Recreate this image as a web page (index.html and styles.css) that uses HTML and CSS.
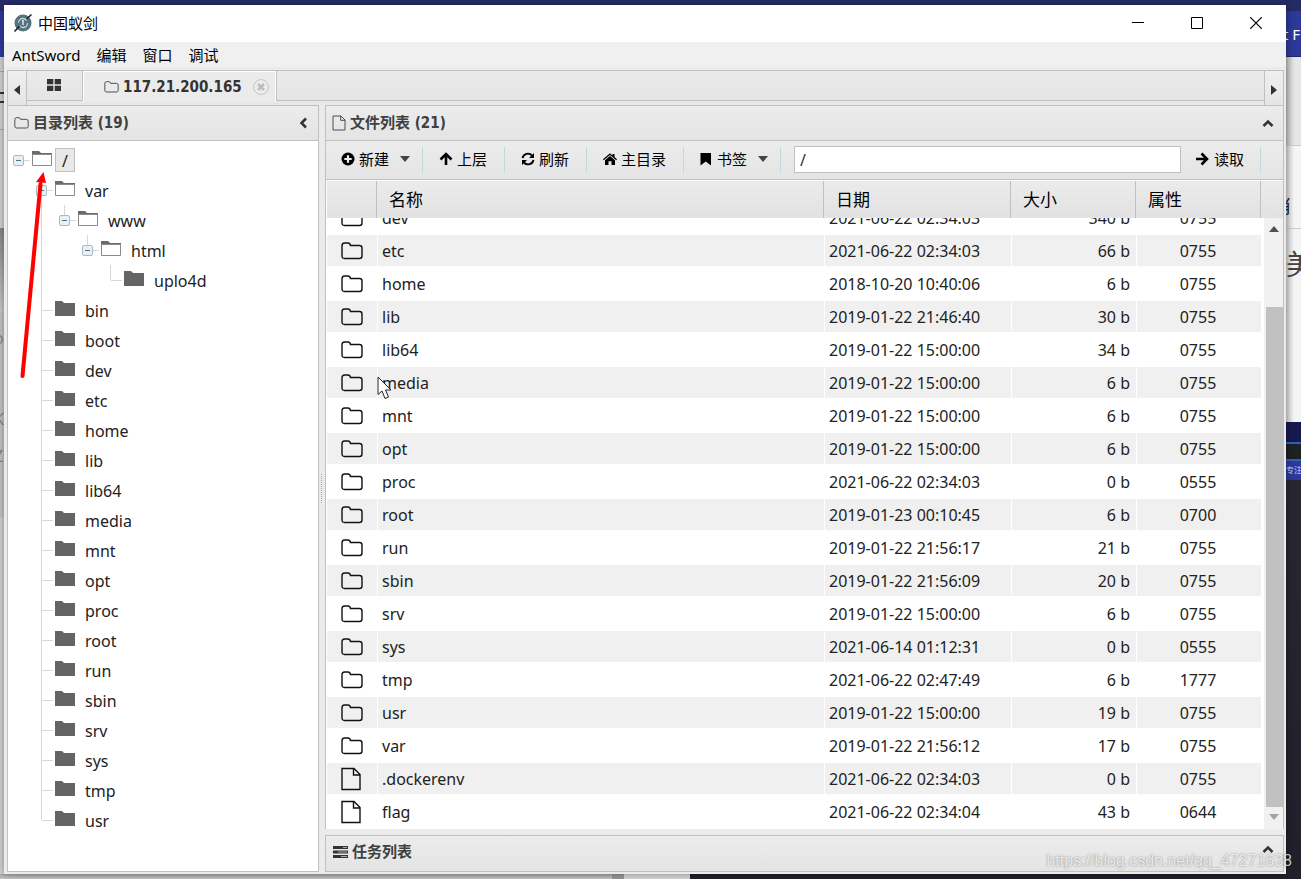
FILE: index.html
```
<!DOCTYPE html>
<html lang="zh-CN">
<head>
<meta charset="utf-8">
<title>中国蚁剑</title>
<link rel="stylesheet" href="styles.css">
</head>
<body>
<svg class="defs" aria-hidden="true">
  <symbol id="folder-line" viewBox="0 0 22 18"><path d="M1 4Q1 1 3.500 1H7Q9 1 9.500 3.500H18.500Q21 3.500 21 6V14Q21 16.500 18.500 16.500H3.500Q1 16.500 1 14Z" fill="none" stroke="currentColor" stroke-width="1.400"/></symbol>
  <symbol id="file-line" viewBox="0 0 20 24"><path d="M1 1.500H13L19 7.500V22.500H1ZM12.500 1.500V8H19" fill="none" stroke="currentColor" stroke-width="1.400"/></symbol>
  <symbol id="dir" viewBox="0 0 21 17"><path d="M0 1H7L9 3H20V16H0Z" fill="#646464"/></symbol>
  <symbol id="dir-open" viewBox="0 0 21 17"><path d="M0 1H7L9 3H20V5H0Z" fill="#6b6b6b"/><path d="M.500 4.500H19.500V15.500H.500Z" fill="#fff" stroke="#8a8a8a"/></symbol>
  <symbol id="chev" viewBox="0 0 12 8"><path d="M1.500 7L6 2.500L10.500 7" fill="none" stroke="#333" stroke-width="2.500"/></symbol>
  <symbol id="caret" viewBox="0 0 10 6"><path d="M0 0H10L5 6Z" fill="#444"/></symbol>
</svg>

<div class="desk" aria-hidden="true">
  <div class="desk-top"></div>
  <div class="desk-left"><i class="nav"></i><i class="line l1"></i><i class="bar b1"></i><i class="bar b2"></i><i class="line l2"></i><i class="shade"></i><i class="plain"></i><span class="g1">o</span><span class="g2">K</span><span class="g3">Z</span></div>
  <div class="desk-right"><i class="nav"></i><i class="band"></i><i class="page"></i><i class="dark"></i><span class="r1">t F</span><span class="r2">肖</span><span class="r3">美</span><span class="r4">专注</span></div>
  <div class="desk-bottom"><i class="thumb"></i><i class="rest"></i><i class="dark"></i></div>
</div>

<main class="window">
  <header class="title">
    <svg class="logo" viewBox="0 0 20 20"><circle cx="10" cy="10" r="8.500" fill="#55737f"/><circle cx="10" cy="10" r="4.500" fill="none" stroke="#c5d3d8" stroke-width="1.300" stroke-dasharray="11 3"/><path d="M10 7V12M9 8H10" stroke="#dfe8eb" stroke-width="1.500"/><path d="M1.500 18.500L6.500 13M13.500 6L18.500 1.500" stroke="#222" stroke-width="1.600"/></svg>
    <h1>中国蚁剑</h1>
    <div class="win-btns">
      <button type="button" aria-label="最小化"><svg viewBox="0 0 12 12"><path d="M0 5.500H12" stroke="#000"/></svg></button>
      <button type="button" aria-label="最大化"><svg viewBox="0 0 12 12"><path d="M.500 .500H11.500V11.500H.500Z" fill="none" stroke="#000"/></svg></button>
      <button type="button" aria-label="关闭"><svg viewBox="0 0 12 12"><path d="M0 0L12 12M12 0L0 12" stroke="#000" stroke-width="1.200"/></svg></button>
    </div>
  </header>
  <nav class="menu"><button type="button">AntSword</button><button type="button">编辑</button><button type="button">窗口</button><button type="button">调试</button></nav>

  <div class="content">
    <div class="tabs">
      <button type="button" class="scroll left" aria-label="向左"><svg viewBox="0 0 6 10"><path d="M6 0V10L0 5Z" fill="#333"/></svg></button>
      <button type="button" class="tab home" aria-label="主页"><svg viewBox="0 0 14 12"><path d="M0 0H6.300V5.300H0ZM7.700 0H14V5.300H7.700ZM0 6.700H6.300V12H0ZM7.700 6.700H14V12H7.700Z" fill="#333"/></svg></button>
      <div class="tab active"><svg class="fi"><use href="#folder-line"/></svg><b>117.21.200.165</b>
        <button type="button" class="close" aria-label="关闭标签"><svg viewBox="0 0 16 16"><circle cx="8" cy="8" r="7.400" fill="#ededed" stroke="#c2c2c2"/><path d="M5 5L11 11M11 5L5 11" stroke="#bdbdbd" stroke-width="2.500"/></svg></button></div>
      <div class="tab-rest"></div>
      <button type="button" class="scroll right" aria-label="向右"><svg viewBox="0 0 6 10"><path d="M0 0V10L6 5Z" fill="#333"/></svg></button>
    </div>

    <div class="cols">
      <section class="panel dirs">
        <header class="bar-head"><svg class="fi"><use href="#folder-line"/></svg><h2>目录列表 (19)</h2><button type="button" class="fold" aria-label="折叠"><svg viewBox="0 0 8 12"><path d="M7 1.500L2.500 6L7 10.500" fill="none" stroke="#333" stroke-width="2.500"/></svg></button></header>
        <ul class="tree">
          <li><div class="node"><button type="button" class="tog" aria-label="收起"></button><svg><use href="#dir-open"/></svg><span class="sel">/</span></div>
            <ul class="trunk">
              <li><div class="node"><button type="button" class="tog" aria-label="收起"></button><svg><use href="#dir-open"/></svg><span>var</span></div>
                <ul><li><div class="node"><button type="button" class="tog" aria-label="收起"></button><svg><use href="#dir-open"/></svg><span>www</span></div>
                  <ul><li><div class="node"><button type="button" class="tog" aria-label="收起"></button><svg><use href="#dir-open"/></svg><span>html</span></div>
                    <ul><li><div class="node"><svg><use href="#dir"/></svg><span>uplo4d</span></div></li></ul></li></ul></li></ul></li>
              <li><div class="node"><svg><use href="#dir"/></svg><span>bin</span></div></li>
              <li><div class="node"><svg><use href="#dir"/></svg><span>boot</span></div></li>
              <li><div class="node"><svg><use href="#dir"/></svg><span>dev</span></div></li>
              <li><div class="node"><svg><use href="#dir"/></svg><span>etc</span></div></li>
              <li><div class="node"><svg><use href="#dir"/></svg><span>home</span></div></li>
              <li><div class="node"><svg><use href="#dir"/></svg><span>lib</span></div></li>
              <li><div class="node"><svg><use href="#dir"/></svg><span>lib64</span></div></li>
              <li><div class="node"><svg><use href="#dir"/></svg><span>media</span></div></li>
              <li><div class="node"><svg><use href="#dir"/></svg><span>mnt</span></div></li>
              <li><div class="node"><svg><use href="#dir"/></svg><span>opt</span></div></li>
              <li><div class="node"><svg><use href="#dir"/></svg><span>proc</span></div></li>
              <li><div class="node"><svg><use href="#dir"/></svg><span>root</span></div></li>
              <li><div class="node"><svg><use href="#dir"/></svg><span>run</span></div></li>
              <li><div class="node"><svg><use href="#dir"/></svg><span>sbin</span></div></li>
              <li><div class="node"><svg><use href="#dir"/></svg><span>srv</span></div></li>
              <li><div class="node"><svg><use href="#dir"/></svg><span>sys</span></div></li>
              <li><div class="node"><svg><use href="#dir"/></svg><span>tmp</span></div></li>
              <li><div class="node"><svg><use href="#dir"/></svg><span>usr</span></div></li>
            </ul></li>
        </ul>
      </section>
      <div class="gutter"><i></i></div>
      <div class="right-col">
        <section class="panel files">
          <header class="bar-head"><svg class="doc"><use href="#file-line"/></svg><h2>文件列表 (21)</h2><button type="button" class="fold up" aria-label="折叠"><svg><use href="#chev"/></svg></button></header>
          <div class="tools">
            <button type="button"><svg viewBox="0 0 14 14"><circle cx="7" cy="7" r="6.500"/><path d="M7 3.300V10.700M3.300 7H10.700" stroke="#eee" stroke-width="2.200"/></svg>新建<svg class="caret"><use href="#caret"/></svg></button>
            <button type="button"><svg viewBox="0 0 14 14"><path d="M7 13V2.500M1.500 7.500L7 2L12.500 7.500" fill="none" stroke="#000" stroke-width="2.600"/></svg>上层</button>
            <button type="button"><svg viewBox="0 0 14 14"><path d="M1.500 6A5.500 5.500 0 0 1 11 3.500M12.500 8A5.500 5.500 0 0 1 3 10.500" fill="none" stroke="#000" stroke-width="1.900"/><path d="M13 1V6H8ZM1 13V8H6Z"/></svg>刷新</button>
            <button type="button"><svg viewBox="0 0 14 14"><path d="M0 7.300L7 1.200L9.500 3.400V2H11.500V5.100L14 7.300L13.200 8.200L7 2.900L.800 8.200Z"/><path d="M2 8.200L7 4L12 8.200V13H8.500V9.300H5.500V13H2Z"/></svg>主目录</button>
            <button type="button"><svg viewBox="0 0 14 14"><path d="M1.500 1H12V13.500L6.750 9.500L1.500 13.500Z"/></svg>书签<svg class="caret"><use href="#caret"/></svg></button>
            <input type="text" value="/" aria-label="路径">
            <button type="button"><svg viewBox="0 0 14 14"><path d="M1 7H11.500M6.500 1.500L12 7L6.500 12.500" fill="none" stroke="#000" stroke-width="2.600"/></svg>读取</button>
            <span class="tail"></span>
          </div>
          <table class="grid head"><colgroup><col class="c0"><col><col class="c2"><col class="c3"><col class="c3"><col class="c5"></colgroup>
            <thead><tr><th></th><th>名称</th><th>日期</th><th>大小</th><th>属性</th><th></th></tr></thead></table>
          <div class="body">
            <div class="view">
            <table class="grid rows" aria-label="文件列表"><colgroup><col class="c0"><col><col class="c2"><col class="c3"><col class="c3"></colgroup>
              <tbody>
              <tr><td><svg><use href="#folder-line"/></svg></td><td>dev</td><td>2021-06-22 02:34:03</td><td>340 b</td><td>0755</td></tr>
              <tr><td><svg><use href="#folder-line"/></svg></td><td>etc</td><td>2021-06-22 02:34:03</td><td>66 b</td><td>0755</td></tr>
              <tr><td><svg><use href="#folder-line"/></svg></td><td>home</td><td>2018-10-20 10:40:06</td><td>6 b</td><td>0755</td></tr>
              <tr><td><svg><use href="#folder-line"/></svg></td><td>lib</td><td>2019-01-22 21:46:40</td><td>30 b</td><td>0755</td></tr>
              <tr><td><svg><use href="#folder-line"/></svg></td><td>lib64</td><td>2019-01-22 15:00:00</td><td>34 b</td><td>0755</td></tr>
              <tr><td><svg><use href="#folder-line"/></svg></td><td>media</td><td>2019-01-22 15:00:00</td><td>6 b</td><td>0755</td></tr>
              <tr><td><svg><use href="#folder-line"/></svg></td><td>mnt</td><td>2019-01-22 15:00:00</td><td>6 b</td><td>0755</td></tr>
              <tr><td><svg><use href="#folder-line"/></svg></td><td>opt</td><td>2019-01-22 15:00:00</td><td>6 b</td><td>0755</td></tr>
              <tr><td><svg><use href="#folder-line"/></svg></td><td>proc</td><td>2021-06-22 02:34:03</td><td>0 b</td><td>0555</td></tr>
              <tr><td><svg><use href="#folder-line"/></svg></td><td>root</td><td>2019-01-23 00:10:45</td><td>6 b</td><td>0700</td></tr>
              <tr><td><svg><use href="#folder-line"/></svg></td><td>run</td><td>2019-01-22 21:56:17</td><td>21 b</td><td>0755</td></tr>
              <tr><td><svg><use href="#folder-line"/></svg></td><td>sbin</td><td>2019-01-22 21:56:09</td><td>20 b</td><td>0755</td></tr>
              <tr><td><svg><use href="#folder-line"/></svg></td><td>srv</td><td>2019-01-22 15:00:00</td><td>6 b</td><td>0755</td></tr>
              <tr><td><svg><use href="#folder-line"/></svg></td><td>sys</td><td>2021-06-14 01:12:31</td><td>0 b</td><td>0555</td></tr>
              <tr><td><svg><use href="#folder-line"/></svg></td><td>tmp</td><td>2021-06-22 02:47:49</td><td>6 b</td><td>1777</td></tr>
              <tr><td><svg><use href="#folder-line"/></svg></td><td>usr</td><td>2019-01-22 15:00:00</td><td>19 b</td><td>0755</td></tr>
              <tr><td><svg><use href="#folder-line"/></svg></td><td>var</td><td>2019-01-22 21:56:12</td><td>17 b</td><td>0755</td></tr>
              <tr><td><svg class="f"><use href="#file-line"/></svg></td><td>.dockerenv</td><td>2021-06-22 02:34:03</td><td>0 b</td><td>0755</td></tr>
              <tr><td><svg class="f"><use href="#file-line"/></svg></td><td>flag</td><td>2021-06-22 02:34:04</td><td>43 b</td><td>0644</td></tr>
              </tbody></table>
            </div>
            <div class="sb"><svg viewBox="0 0 10 6"><path d="M0 6H10L5 0Z" fill="#505050"/></svg><i></i><svg viewBox="0 0 10 6"><path d="M0 0H10L5 6Z" fill="#a3a3a3"/></svg></div>
          </div>
        </section>
        <section class="panel tasks">
          <header class="bar-head"><svg class="ti" viewBox="0 0 15 12"><path d="M0 0H15V3H0ZM0 4.500H15V7.500H0ZM0 9H15V12H0Z" fill="#333"/><path d="M10 1.500H14M5 6H14M8 10.500H14" stroke="#aaa"/></svg><h2>任务列表</h2><button type="button" class="fold up" aria-label="展开"><svg><use href="#chev"/></svg></button></header>
        </section>
      </div>
    </div>
  </div>
</main>

<svg class="pointer-line" viewBox="0 0 30 212" aria-hidden="true"><path d="M4.500 206L22.500 14" stroke="#f00" stroke-width="4" stroke-linecap="round"/><path d="M25.500 2L28 13L18 12Z" fill="#f00"/></svg>
<svg class="cursor" viewBox="0 0 16 24" aria-hidden="true"><path d="M1 1V18.500L5 15L8 22.500L11.500 21L8.500 14H14Z" fill="#fff" stroke="#222"/></svg>
<p class="mark">https://blog.csdn.net/qq_47271638</p>
</body>
</html>
```

FILE: styles.css
```
* { box-sizing: border-box; }
body {
  margin: 0; min-height: 100vh; padding: 5px 15px 6px 4px; position: relative; display: flex; overflow: hidden;
  background: #d4d4d4; color: #222;
  font: 16px/20px "Noto Sans", "Noto Sans CJK SC", sans-serif;
}
button { margin: 0; padding: 0; border: 0; background: none; font: inherit; color: inherit; display: flex; align-items: center; justify-content: center; }
h1, h2, p, ul { margin: 0; padding: 0; }
svg { display: block; flex: none; }
.defs { position: absolute; width: 0; height: 0; }

/* desktop behind the window */
.desk, .desk > div, .desk i, .desk span { position: absolute; }
.desk { inset: 0; overflow: hidden; }
.desk-top { left: 0; right: 0; top: 0; height: 11px; background: #282d6b; }
.desk-left { left: 0; top: 0; bottom: 0; width: 8px; overflow: hidden; }
.desk-left i { left: 0; width: 8px; }
.desk-left .nav { top: 11px; height: 46px; background: #2f3c9c; }
.desk-left .line { height: 1px; background: #aaa; }
.l1 { top: 71px; }
.l2 { top: 129px; }
.desk-left .bar { height: 2px; background: #333; }
.b1 { top: 92px; }
.b2 { top: 101px; }
.desk-left .shade { top: 228px; height: 84px; background: linear-gradient(#888, #ccc); }
.desk-left .plain { top: 312px; height: 205px; background: #c6c6c6; }
.desk-left span { left: -6px; color: #8a8a8a; }
.g1 { top: 328px; }
.g2 { top: 409px; }
.g3 { top: 446px; }
.desk-right { right: 0; top: 0; bottom: 0; width: 15px; overflow: hidden; background: linear-gradient(90deg, #d0d0d0, #f5f5f5 8px); }
.desk-right i { left: 0; right: 0; }
.desk-right .nav { top: 0; height: 57px; background: linear-gradient(#252b63 11px, #2c3998 11px); border-bottom: 1px solid #20296e; }
.desk-right .band { top: 57px; height: 89px; background: linear-gradient(90deg, #bbb, #e6e6e6 8px); border-bottom: 1px solid #ccc; }
.desk-right .page { top: 228px; height: 1px; background: #ccc; }
.desk-right .dark { top: 422px; bottom: 0; background: linear-gradient(#17184f 20px, #2e62b8 20px, #2e62b8 22px, #1e2022 22px, #1e2022 37px, #2e62b8 37px, #2e62b8 39px, #2e399a 39px, #2e399a 58px, #282832 58px, #20202c); }
.desk-right span { white-space: nowrap; }
.r1 { top: 24px; left: -3px; color: #fff; font-size: 15px; }
.r2 { top: 196px; left: -12px; font-size: 18px; color: #222; }
.r3 { top: 254px; left: 0; font-size: 28px; color: #444; }
.r4 { top: 460px; left: 0; font-size: 8px; color: #c8cff5; }
.desk-bottom { left: 0; right: 0; bottom: 0; height: 6px; background: linear-gradient(#a8a8a8, #d0d0d0); }
.desk-bottom i { top: 0; bottom: 0; }
.desk-bottom .thumb { left: 612px; width: 12px; background: #999; }
.desk-bottom .rest { left: 624px; width: 66px; background: #d8d8d8; }
.desk-bottom .dark { left: 690px; right: 0; background: #20202b; }

.window { position: relative; flex: 1; min-width: 0; display: flex; flex-direction: column; background: #ebebeb; box-shadow: 0 0 8px rgba(0, 0, 0, .4); }
.title { height: 37px; background: #fff; display: flex; align-items: center; padding: 0 1px 2px 9px; color: #000; }
.logo { width: 20px; height: 20px; }
.title h1 { font-size: 15px; font-weight: 400; margin-left: 5px; flex: 1; }
.win-btns { display: flex; }
.win-btns button { width: 59px; height: 35px; }
.win-btns svg { width: 12px; height: 12px; }
.menu { height: 25px; background: #f0f0f0; display: flex; gap: 16px; padding: 0 8px; font-size: 15px; color: #000; }
.content { flex: 1; display: flex; flex-direction: column; padding: 3px 2px 2px 3px; }

.tabs { height: 35px; display: flex; background: #e7e7e7; border: 1px solid #c0c0c0; border-bottom: 0; }
.scroll { width: 19px; background: linear-gradient(#efefef, #e5e5e5); padding-top: 3px; }
.scroll svg { width: 6px; height: 10px; }
.scroll.left { border-right: 1px solid #c0c0c0; }
.scroll.right { border-left: 1px solid #c0c0c0; }
.tab, .tab-rest { height: 30px; border-bottom: 1px solid #c0c0c0; background: linear-gradient(#ebebeb, #e4e4e4); }
.home { width: 56px; border-right: 1px solid #c0c0c0; padding: 0 2px 1px 0; }
.home svg { width: 14px; height: 12px; }
.active { height: 31px; display: flex; align-items: center; border: 1px solid #fff; border-bottom: 0; background: #ebebeb; padding: 0 6px 1px 20px; }
.tab-rest { flex: 1; border-left: 1px solid #c0c0c0; }
.fi { width: 15px; height: 12px; color: #444; }
.active b { font: 700 15px/20px "DejaVu Sans Condensed", "Noto Sans", sans-serif; color: #333; margin: 0 11px 0 4px; }
.close svg { width: 16px; height: 16px; }

.cols { flex: 1; display: flex; }
.panel { border: 1px solid #c0c0c0; background: #fff; }
.dirs { width: 312px; }
.bar-head { height: 35px; display: flex; align-items: center; padding: 0 9px 0 6px; border-bottom: 1px solid #c0c0c0; background: linear-gradient(#ececec, #e4e4e4); }
.dirs .bar-head { padding-right: 11px; }
.bar-head h2 { flex: 1; margin-left: 4px; font: 700 15px/20px "DejaVu Sans Condensed", "Noto Sans CJK SC", sans-serif; color: #404040; }
.doc { width: 14px; height: 16px; color: #444; }
.ti { width: 15px; height: 12px; }
.fold svg { width: 8px; height: 12px; }
.fold.up svg { width: 12px; height: 8px; }
.gutter { width: 6px; display: flex; align-items: center; padding-left: 2px; }
.gutter i { width: 2px; height: 29px; border-left: 1px dotted #aaa; }
.right-col { flex: 1; min-width: 0; display: flex; flex-direction: column; gap: 6px; }
.files { flex: 1; display: flex; flex-direction: column; border-bottom: 0; }
.tasks .bar-head { border-bottom: 0; padding-bottom: 3px; padding-left: 7px; }
.tasks .fold { padding-bottom: 6px; }

.tree { padding-top: 4px; list-style: none; }
.tree ul { padding-left: 23px; list-style: none; }
.tree ul > li { background: linear-gradient(#d8d8d8, #d8d8d8) 10px 0 / 1px 100% no-repeat; }
.tree ul > li:last-child { background-size: 1px 15px; }
.tree .trunk > li:first-child { background-position: 10px 15px; }
.node { height: 30px; display: flex; align-items: center; position: relative; padding-left: 24px; background: linear-gradient(#d8d8d8, #d8d8d8) 11px 15px / 11px 1px no-repeat; }
.node svg { width: 21px; height: 17px; margin-bottom: 3px; }
.node span { margin-left: 2px; padding: 0 6px; height: 24px; line-height: 24px; border: 1px solid transparent; }
.node .sel { background: #e8e8e8; border-color: #c0c0c0; }
.tog { position: absolute; left: 5px; top: 10px; width: 11px; height: 11px; border: 1px solid #a9bcc6; border-radius: 2px; background: linear-gradient(#4d7386, #4d7386) center / 5px 1px no-repeat #e9f0f4; }

.tools { height: 39px; display: flex; align-items: center; padding-bottom: 1px; border-bottom: 1px solid #c0c0c0; background: linear-gradient(#ececec, #e4e4e4); font-size: 15px; color: #000; }
.tools button { height: 26px; padding: 0 17px 2px 16px; border-right: 1px solid #c0d8de; white-space: nowrap; gap: 4px; }
.tools button svg { width: 14px; height: 14px; }
.tools button .caret { width: 10px; height: 6px; margin-left: 7px; }
.tools button:has(.caret) { padding-right: 12px; padding-left: 15px; }
.tools input { flex: 1; min-width: 0; height: 27px; margin-left: 13px; padding: 0 5px; border: 1px solid #c0c0c0; background: #fff; font: inherit; font-size: 16px; color: #333; }
.tools input + button { padding: 0 16px 2px 14px; gap: 5px; }
.tail { width: 22px; }

.grid { width: 100%; table-layout: fixed; border-collapse: separate; border-spacing: 0; }
.c0 { width: 50px; }
.c2 { width: 187px; }
.c3 { width: 125px; }
.c5 { width: 22px; }
.head { border-top: 1px solid #fff; border-left: 1px solid #fff; background: linear-gradient(#ebebeb, #e2e2e2); }
.head th { height: 37px; padding: 0 12px; text-align: left; font-weight: 400; font-size: 17px; border-right: 1px solid #c0c0c0; color: #000; }
.head th:last-child { border-right: 0; }
.body { flex: 1; display: flex; overflow: hidden; padding-left: 1px; }
.view { flex: 1; min-width: 0; height: 611px; overflow: hidden; padding-right: 3px; }
.rows { margin-top: -16px; }
.rows td { height: 33px; padding: 0 6px 0 4px; border-left: 1px solid #fff; border-bottom: 2px solid #fff; line-height: 20px; }
.rows td:first-child { border-left: 0; }
.rows tr:nth-child(even) td { background: #f0f0f0; }
.rows td:nth-child(4) { text-align: right; }
.rows td:nth-child(5) { text-align: center; }
.rows svg { width: 22px; height: 18px; margin-left: 10px; color: #111; }
.rows svg.f { width: 20px; height: 24px; }
.sb { width: 19px; background: #f1f1f1; display: flex; flex-direction: column; align-items: center; padding: 8px 0 9px; }
.sb svg { width: 10px; height: 6px; }
.sb i { width: 17px; flex: 1; align-self: flex-end; margin: 75px 0 7px; background: #c1c1c1; }

.pointer-line { position: absolute; left: 18px; top: 170px; width: 30px; height: 212px; }
.cursor { position: absolute; left: 377px; top: 376px; width: 16px; height: 24px; }
.mark { position: absolute; right: 9px; bottom: 9px; font: 16px/20px "Liberation Sans", sans-serif; color: rgba(255, 255, 255, .75); text-shadow: 0 0 2px rgba(0, 0, 0, .45); }
```
